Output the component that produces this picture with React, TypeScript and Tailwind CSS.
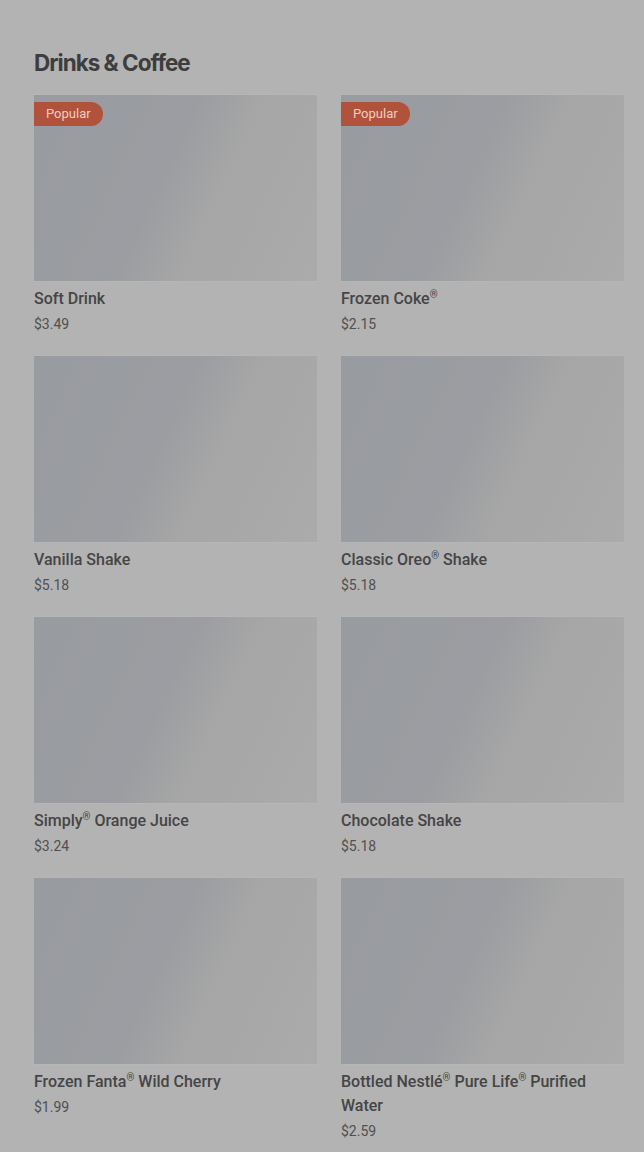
import React from 'react';

const items = [
  { name: 'Soft Drink', price: '$3.49', popular: true },
  { name: 'Frozen Coke®', price: '$2.15', popular: true },
  { name: 'Vanilla Shake', price: '$5.18' },
  { name: 'Classic Oreo® Shake', price: '$5.18' },
  { name: 'Simply® Orange Juice', price: '$3.24' },
  { name: 'Chocolate Shake', price: '$5.18' },
  { name: 'Frozen Fanta® Wild Cherry', price: '$1.99' },
  { name: 'Bottled Nestlé® Pure Life® Purified Water', price: '$2.59' },
];

// render the ® marks small and raised, like the menu does
function ItemName({ name }: { name: string }) {
  const parts = name.split('®');
  return (
    <>
      {parts.map((part, i) => (
        <React.Fragment key={i}>
          {part}
          {i < parts.length - 1 && (
            <span className="align-super text-[10px] leading-none">®</span>
          )}
        </React.Fragment>
      ))}
    </>
  );
}

export default function App() {
  return (
    <div className="min-h-[1152px] bg-[#b3b3b3] pl-[34px] pt-[47px] pb-4 font-['Roboto',sans-serif]">
      <h2 className="font-['Inter',sans-serif] text-[22.5px] leading-[32px] font-bold tracking-[-0.045em] text-[#3d3d3d] mb-[15px]">
        Drinks &amp; Coffee
      </h2>

      <div className="grid grid-cols-[283px_283px] gap-x-[24px] gap-y-[21px]">
        {items.map((item, index) => (
          <div key={index} className="flex flex-col">
            <div className="relative h-[188px] bg-[#b6b6b6] pt-[1px]">
              <div className="h-[186px] bg-[linear-gradient(115deg,#989ba0_0%,#9b9da1_45%,#a6a6a6_62%,#ababab_100%)]" />
              {item.popular && (
                <span className="absolute left-0 top-[8px] h-[24px] px-[12px] rounded-r-full bg-[#b1523d] text-[#f1cdbf] text-[13px] leading-[24px]">
                  Popular
                </span>
              )}
            </div>
            <div className="mt-[5px] text-[16px] leading-[24px] font-medium text-[#454545]">
              <ItemName name={item.name} />
            </div>
            <div className="mt-[4px] text-[14px] leading-[19px] text-[#505050]">
              {item.price}
            </div>
          </div>
        ))}
      </div>
    </div>
  );
}
